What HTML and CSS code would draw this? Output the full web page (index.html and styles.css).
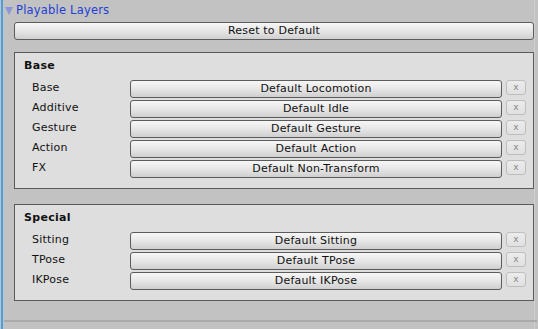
FILE: index.html
```html
<!DOCTYPE html>
<html>
<head>
<meta charset="utf-8">
<link rel="stylesheet" href="styles.css">
</head>
<body>
<div class="panel">
  <div class="foldout">
    <svg class="tri" width="8" height="8" viewBox="0 0 8 8"><polygon points="0,0 8,0 4,8" fill="#8a96d8"/></svg>
    <span class="title">Playable Layers</span>
  </div>
  <div class="content">
    <button class="btn reset">Reset to Default</button>
    <div class="box">
      <div class="box-title">Base</div>
      <div class="row"><span class="label">Base</span><button class="btn field">Default Locomotion</button><span class="x">x</span></div>
      <div class="row"><span class="label">Additive</span><button class="btn field">Default Idle</button><span class="x">x</span></div>
      <div class="row"><span class="label">Gesture</span><button class="btn field">Default Gesture</button><span class="x">x</span></div>
      <div class="row"><span class="label">Action</span><button class="btn field">Default Action</button><span class="x">x</span></div>
      <div class="row"><span class="label">FX</span><button class="btn field">Default Non-Transform</button><span class="x">x</span></div>
    </div>
    <div class="box special">
      <div class="box-title">Special</div>
      <div class="row"><span class="label">Sitting</span><button class="btn field">Default Sitting</button><span class="x">x</span></div>
      <div class="row"><span class="label">TPose</span><button class="btn field">Default TPose</button><span class="x">x</span></div>
      <div class="row"><span class="label">IKPose</span><button class="btn field">Default IKPose</button><span class="x">x</span></div>
    </div>
  </div>
  <div class="sep"></div>
</div>
</body>
</html>
```
FILE: styles.css
```css
html, body {
  margin: 0;
  padding: 0;
  height: 100%;
  background: #c2c2c2;
  font-family: "DejaVu Sans", Verdana, sans-serif;
  font-size: 11px;
  color: #111;
}
body {
  padding-left: 1px;
  box-sizing: border-box;
  overflow: hidden;
}
.panel {
  width: 534px;
  height: 329px;
  border-left: 2px solid #4a9fe0;
  border-right: 1px solid #cfcfcf;
  box-sizing: border-box;
  position: relative;
}
.foldout {
  height: 22px;
  display: flex;
  align-items: center;
  padding-left: 2px;
  padding-bottom: 2px;
  box-sizing: border-box;
}
.tri { margin-right: 3px; margin-top: 1px; }
.title {
  color: #1f3fd6;
  font-size: 11.5px;
  letter-spacing: 0.2px;
}
.content {
  padding-left: 11px;
  display: flex;
  flex-direction: column;
}
.btn {
  font-family: inherit;
  font-size: 11px;
  color: #111;
  border: 1px solid #5c5c5c;
  border-radius: 3px;
  background: linear-gradient(#f7f7f7, #e4e4e4 55%, #cfcfcf);
  padding: 0;
  height: 18px;
  line-height: 16px;
  text-align: center;
  letter-spacing: 0.2px;
}
.reset { width: 520px; }
.box {
  margin-top: 12px;
  width: 520px;
  box-sizing: border-box;
  border: 1px solid #5a5a5a;
  background: #dedede;
  padding: 5px 7px 10px 9px;
  display: flex;
  flex-direction: column;
  gap: 2px;
}
.special { margin-top: 15px; }
.box-title {
  font-weight: bold;
  height: 20px;
  line-height: 16px;
  letter-spacing: 0.3px;
}
.row {
  display: flex;
  align-items: center;
  height: 18px;
}
.label {
  width: 106px;
  padding-left: 8px;
  box-sizing: border-box;
  flex: none;
  line-height: 14px;
  margin-top: -3px;
  letter-spacing: 0.2px;
}
.field { width: 372px; flex: none; }
.x {
  margin-left: 4px;
  width: 20px;
  height: 15px;
  box-sizing: border-box;
  border: 1px solid #bdbdbd;
  border-radius: 3px;
  background: linear-gradient(#ececec, #e0e0e0);
  color: #8a8a8a;
  font-size: 9px;
  line-height: 12px;
  text-align: center;
  margin-top: -3px;
}
.sep {
  position: absolute;
  left: 1px;
  right: -3px;
  top: 320px;
  height: 2px;
  background: #aaaaaa;
}
```
